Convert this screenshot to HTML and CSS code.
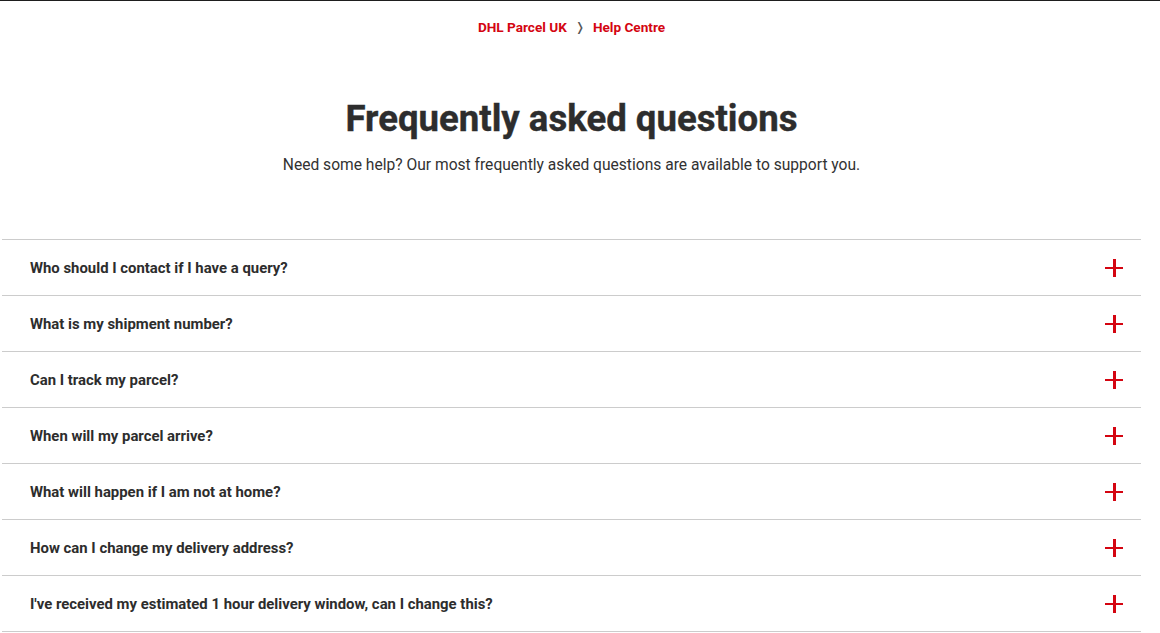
FILE: index.html
```html
<!DOCTYPE html>
<html lang="en">
<head>
<meta charset="utf-8">
<title>FAQ</title>
<link rel="stylesheet" href="styles.css">
</head>
<body>
<div class="topline"></div>
<main class="page">
  <nav class="crumbs">
    <a class="crumb" href="#">DHL Parcel UK</a>
    <span class="sep">&#x276D;</span>
    <a class="crumb" href="#">Help Centre</a>
  </nav>
  <header class="intro">
    <h1 class="title">Frequently asked questions</h1>
    <p class="lead">Need some help? Our most frequently asked questions are available to support you.</p>
  </header>
  <ul class="faq">
    <li class="item"><span class="q">Who should I contact if I have a query?</span><span class="plus"></span></li>
    <li class="item"><span class="q">What is my shipment number?</span><span class="plus"></span></li>
    <li class="item"><span class="q">Can I track my parcel?</span><span class="plus"></span></li>
    <li class="item"><span class="q">When will my parcel arrive?</span><span class="plus"></span></li>
    <li class="item"><span class="q">What will happen if I am not at home?</span><span class="plus"></span></li>
    <li class="item"><span class="q">How can I change my delivery address?</span><span class="plus"></span></li>
    <li class="item"><span class="q">I've received my estimated 1 hour delivery window, can I change this?</span><span class="plus"></span></li>
  </ul>
</main>
</body>
</html>
```
FILE: styles.css
```css
html, body {
  margin: 0;
  padding: 0;
  background: #fff;
}
body {
  font-family: "Roboto", "Liberation Sans", sans-serif;
  color: #323232;
  overflow: hidden;
}
.topline {
  height: 1px;
  background: #1e1e1e;
}
.page {
  width: 1143px;
}
.crumbs {
  display: flex;
  justify-content: center;
  align-items: center;
  gap: 8px;
  height: 52px;
  font-size: 13.6px;
  font-weight: 700;
}
.crumb {
  color: #d40511;
  text-decoration: none;
}
.sep {
  color: #555;
  font-weight: 400;
  font-size: 12px;
}
.intro {
  text-align: center;
  padding-top: 44px;
}
.title {
  margin: 0;
  font-size: 36.6px;
  line-height: 44px;
  font-weight: 700;
  color: #2d2d2d;
  -webkit-text-stroke: 0.4px #2d2d2d;
}
.lead {
  margin: 13px 0 0;
  font-size: 15.6px;
  line-height: 22px;
  color: #323232;
}
.faq {
  list-style: none;
  margin: 63px 0 0 2px;
  padding: 0;
  width: 1139px;
  border-top: 1px solid #cccccc;
}
.item {
  display: flex;
  align-items: center;
  justify-content: space-between;
  height: 55px;
  border-bottom: 1px solid #cccccc;
  padding: 0 18px 0 28px;
}
.q {
  font-size: 14.9px;
  font-weight: 700;
  color: #2d2d2d;
}
.plus {
  position: relative;
  width: 18px;
  height: 18px;
}
.plus::before, .plus::after {
  content: "";
  position: absolute;
  background: #d40511;
}
.plus::before {
  left: 0;
  top: 8px;
  width: 18px;
  height: 2.5px;
}
.plus::after {
  left: 8px;
  top: 0;
  width: 2.5px;
  height: 18px;
}
```
